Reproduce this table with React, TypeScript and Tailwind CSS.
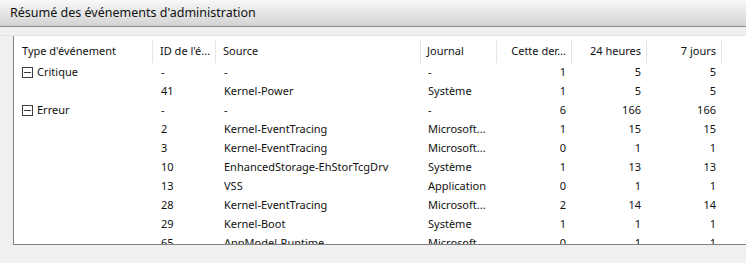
import React from 'react';

type Row = {
    group?: string;
    id: string;
    source: string;
    journal: string;
    last: string;
    day: string;
    week: string;
};

const rows: Row[] = [
    { group: 'Critique', id: '-', source: '-', journal: '-', last: '1', day: '5', week: '5' },
    { id: '41', source: 'Kernel-Power', journal: 'Système', last: '1', day: '5', week: '5' },
    { group: 'Erreur', id: '-', source: '-', journal: '-', last: '6', day: '166', week: '166' },
    { id: '2', source: 'Kernel-EventTracing', journal: 'Microsoft...', last: '1', day: '15', week: '15' },
    { id: '3', source: 'Kernel-EventTracing', journal: 'Microsoft...', last: '0', day: '1', week: '1' },
    { id: '10', source: 'EnhancedStorage-EhStorTcgDrv', journal: 'Système', last: '1', day: '13', week: '13' },
    { id: '13', source: 'VSS', journal: 'Application', last: '0', day: '1', week: '1' },
    { id: '28', source: 'Kernel-EventTracing', journal: 'Microsoft...', last: '2', day: '14', week: '14' },
    { id: '29', source: 'Kernel-Boot', journal: 'Système', last: '1', day: '1', week: '1' },
    { id: '65', source: 'AppModel-Runtime', journal: 'Microsoft...', last: '0', day: '1', week: '1' },
];

const cols = 'grid grid-cols-[139px_63px_205px_76px_75px_75px_75px_1fr]';

const MinusBox = () => (
    <span className="inline-flex items-center justify-center w-[11px] h-[11px] border border-[#3c3c3c] mr-[4px] shrink-0">
        <span className="block w-[7px] h-px bg-[#3c3c3c]" />
    </span>
);

export default function App() {
    return (
        <div className="w-[746px] h-[263px] bg-[#f0f0f0] overflow-hidden flex flex-col text-[11px] text-[#111] font-['Noto_Sans',sans-serif]">
            {/* barre de titre */}
            <div className="h-[27px] shrink-0 flex items-center pl-[10px] text-[12.5px] bg-gradient-to-b from-[#f8f8f8] to-[#d3d3d3] border-b border-[#8a8a8a]">
                Résumé des événements d'administration
            </div>

            <div className="h-[9px] shrink-0 border-b border-[#e3e3e3]" />

            <div className="flex">
                <div className="w-[13px] shrink-0" />
                <div className="flex-1 h-[209px] bg-white border-l border-b border-[#828282] overflow-hidden pt-[4px]">
                    {/* en-tête */}
                    <div className={`${cols} h-[23px] items-stretch`}>
                        <div className="flex items-center pl-[8px] border-r border-[#e5e5e5]">Type d'événement</div>
                        <div className="flex items-center pl-[7px] border-r border-[#e5e5e5]">ID de l'é...</div>
                        <div className="flex items-center pl-[7px] border-r border-[#e5e5e5]">Source</div>
                        <div className="flex items-center pl-[6px] border-r border-[#e5e5e5]">Journal</div>
                        <div className="flex items-center justify-end pr-[5px] border-r border-[#e5e5e5]">Cette der...</div>
                        <div className="flex items-center justify-end pr-[5px] border-r border-[#e5e5e5]">24 heures</div>
                        <div className="flex items-center justify-end pr-[5px] border-r border-[#e5e5e5]">7 jours</div>
                        <div />
                    </div>

                    {rows.map((r, i) => (
                        <div key={i} className={`${cols} h-[19px] items-center whitespace-nowrap`}>
                            <div className="flex items-center pl-[8px]">
                                {r.group && (
                                    <>
                                        <MinusBox />
                                        {r.group}
                                    </>
                                )}
                            </div>
                            <div className="pl-[8px]">{r.id}</div>
                            <div className="pl-[8px]">{r.source}</div>
                            <div className="pl-[7px]">{r.journal}</div>
                            <div className="text-right pr-[6px]">{r.last}</div>
                            <div className="text-right pr-[6px]">{r.day}</div>
                            <div className="text-right pr-[6px]">{r.week}</div>
                            <div />
                        </div>
                    ))}
                </div>
            </div>
        </div>
    );
}
